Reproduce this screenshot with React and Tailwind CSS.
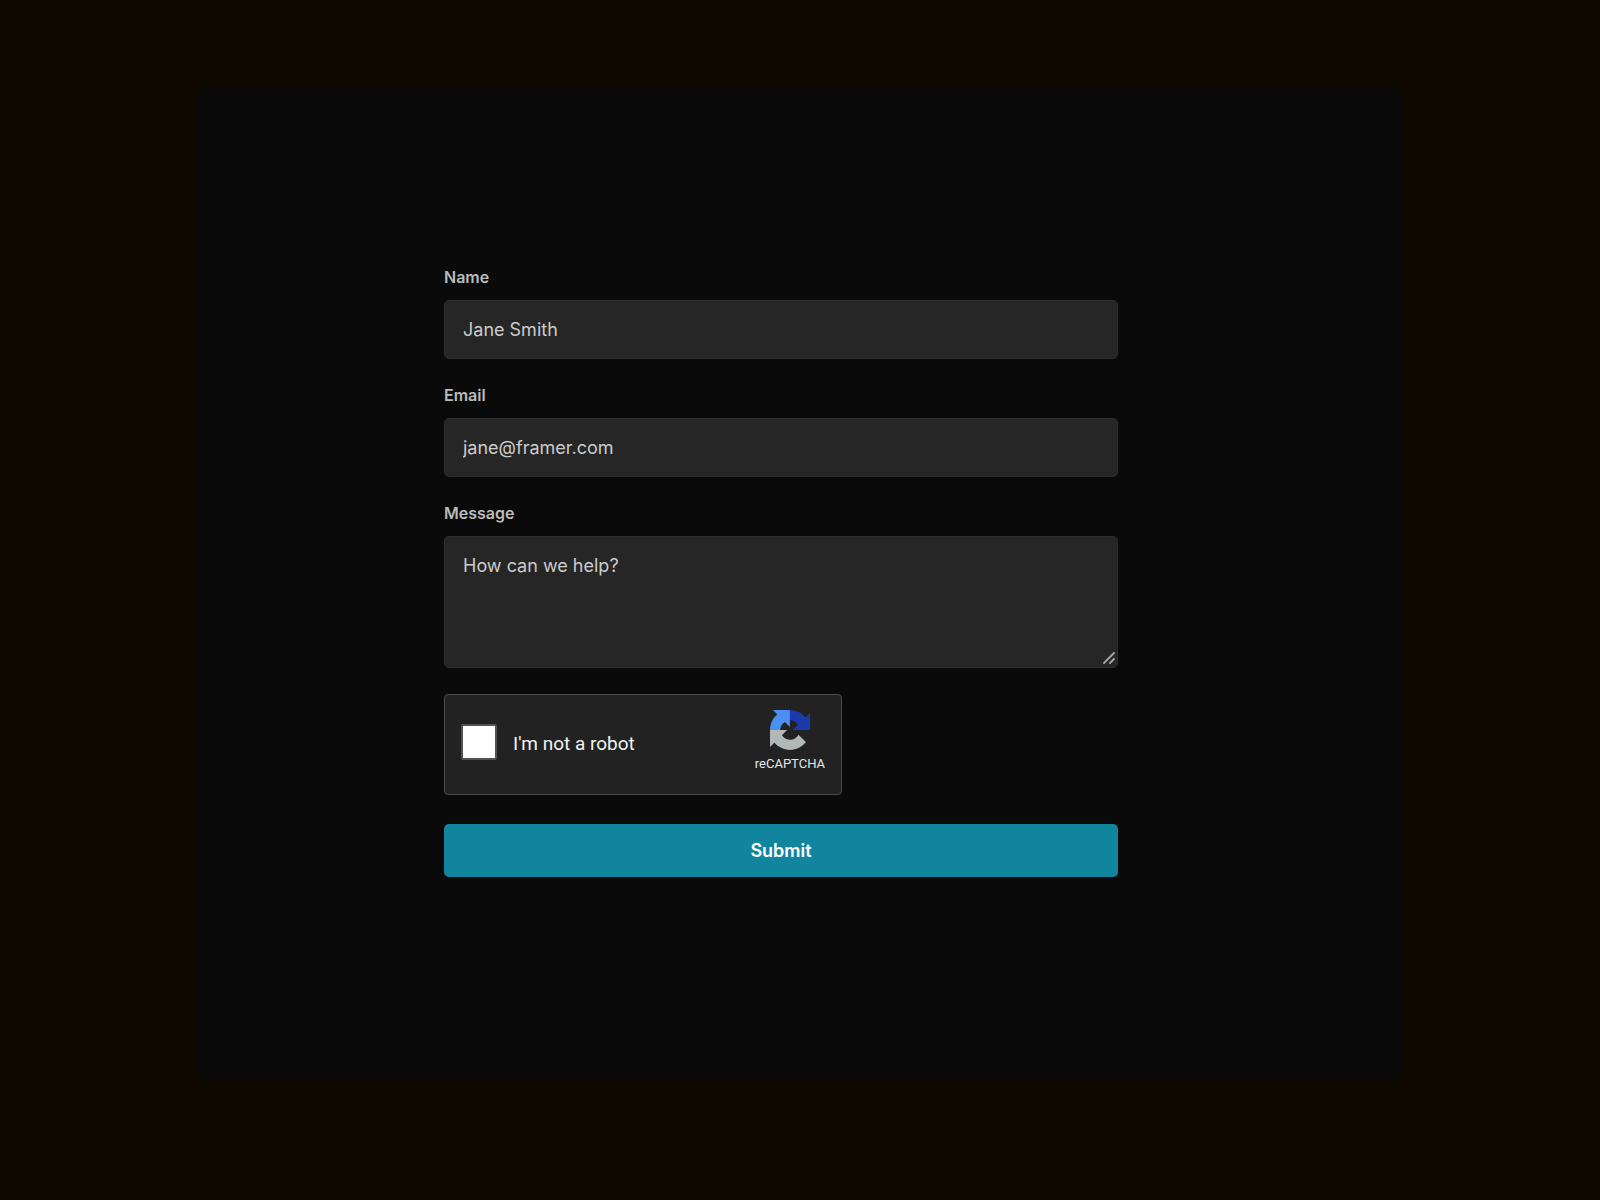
import { useState } from 'react'

const inputClass =
  'block w-full rounded-[5px] border border-[#2d2d2d] bg-[#262626] px-[18px] text-lg leading-6 text-[#cccccc] placeholder:text-[#cccccc] focus:outline-none focus:border-[#1287a0]'

const labelClass = 'block pb-[13px] text-base leading-5 font-semibold text-[#bbbbbb]'

const RecaptchaLogo = () => (
  <svg className="h-10 w-10" viewBox="0 0 64 64" aria-hidden="true">
    <path
      fill="#1c3aa9"
      d="M64 31.955l-.033-1.37V4.687l-7.16 7.16C50.948 4.674 42.033.093 32.05.093c-10.4 0-19.622 4.96-25.458 12.64l11.736 11.86a15.55 15.55 0 0 1 4.754-5.334c2.05-1.6 4.952-2.906 8.968-2.906.485 0 .86.057 1.135.163 4.976.393 9.288 3.14 11.828 7.124l-8.307 8.307L64 31.953"
    />
    <path
      fill="#4a90f4"
      d="M31.862.094l-1.37.033H4.594l7.16 7.16C4.58 13.147 0 22.06 0 32.046c0 10.4 4.96 19.622 12.64 25.458L24.5 45.768a15.55 15.55 0 0 1-5.334-4.754c-1.6-2.05-2.906-4.952-2.906-8.968 0-.485.057-.86.163-1.135.393-4.976 3.14-9.288 7.124-11.828l8.307 8.307L31.86.095"
    />
    <path
      fill="#b2b8b6"
      d="M.001 32.045l.033 1.37v25.898l7.16-7.16c5.86 7.173 14.774 11.754 24.76 11.754 10.4 0 19.622-4.96 25.458-12.64l-11.736-11.86a15.55 15.55 0 0 1-4.754 5.334c-2.05 1.6-4.952 2.906-8.968 2.906-.485 0-.86-.057-1.135-.163-4.976-.393-9.288-3.14-11.828-7.124l8.307-8.307c-10.522.04-22.4.066-27.295-.005"
    />
  </svg>
)

const App = () => {
  const [form, setForm] = useState({ name: '', email: '', message: '' })
  const [checked, setChecked] = useState(false)

  const handleChange = (e) => {
    setForm({ ...form, [e.target.name]: e.target.value })
  }

  return (
    <div className="min-h-screen bg-[#0e0a00] px-6 pt-[88px] pb-[120px] font-['Inter',sans-serif]">
      <main className="mx-auto max-w-[1204px] rounded-md bg-[#0a0a0a] pt-[179px] pb-[203px] pl-[246px] pr-[284px]">
        <form onSubmit={(e) => e.preventDefault()}>
          <div className="mb-[26px]">
            <label htmlFor="name" className={labelClass}>Name</label>
            <input
              id="name"
              name="name"
              type="text"
              value={form.name}
              onChange={handleChange}
              placeholder="Jane Smith"
              className={`${inputClass} h-[59px]`}
            />
          </div>

          <div className="mb-[26px]">
            <label htmlFor="email" className={labelClass}>Email</label>
            <input
              id="email"
              name="email"
              type="email"
              value={form.email}
              onChange={handleChange}
              placeholder="jane@framer.com"
              className={`${inputClass} h-[59px]`}
            />
          </div>

          <div className="mb-[26px]">
            <label htmlFor="message" className={labelClass}>Message</label>
            <div className="relative">
              <textarea
                id="message"
                name="message"
                value={form.message}
                onChange={handleChange}
                placeholder="How can we help?"
                className={`${inputClass} h-[132px] resize-none py-[17px]`}
              />
              <svg
                className="pointer-events-none absolute right-[3px] bottom-1 h-3 w-3"
                viewBox="0 0 12 12"
                fill="none"
                stroke="#a3a5a8"
                strokeWidth="1.8"
                strokeLinecap="round"
                aria-hidden="true"
              >
                <path d="M1 11L11 1M7 11l4-4" />
              </svg>
            </div>
          </div>

          <div className="mb-[29px] flex h-[101px] max-w-[398px] justify-between rounded border border-[#4c4c4c] bg-[#222222] font-['Roboto',sans-serif]">
            <div className="flex items-center gap-4 pb-1.5 pl-4">
              <input
                id="robot"
                type="checkbox"
                checked={checked}
                onChange={(e) => setChecked(e.target.checked)}
                className="h-9 w-9 appearance-none rounded-xs border-2 border-[#525252] bg-white checked:bg-[#1287a0]"
              />
              <label htmlFor="robot" className="pt-1 text-[19px] leading-6 text-[#f0f3f3]">I'm not a robot</label>
            </div>
            <div className="flex flex-col items-center pt-[15px] pr-4">
              <RecaptchaLogo />
              <span className="pt-1 text-[13px] leading-5 text-[#e4e8e8]">reCAPTCHA</span>
            </div>
          </div>

          <button
            type="submit"
            className="h-[53px] w-full rounded-[5px] bg-[#12859e] text-lg leading-6 font-semibold text-white hover:bg-[#1594b0]"
          >
            Submit
          </button>
        </form>
      </main>
    </div>
  )
}

export default App
